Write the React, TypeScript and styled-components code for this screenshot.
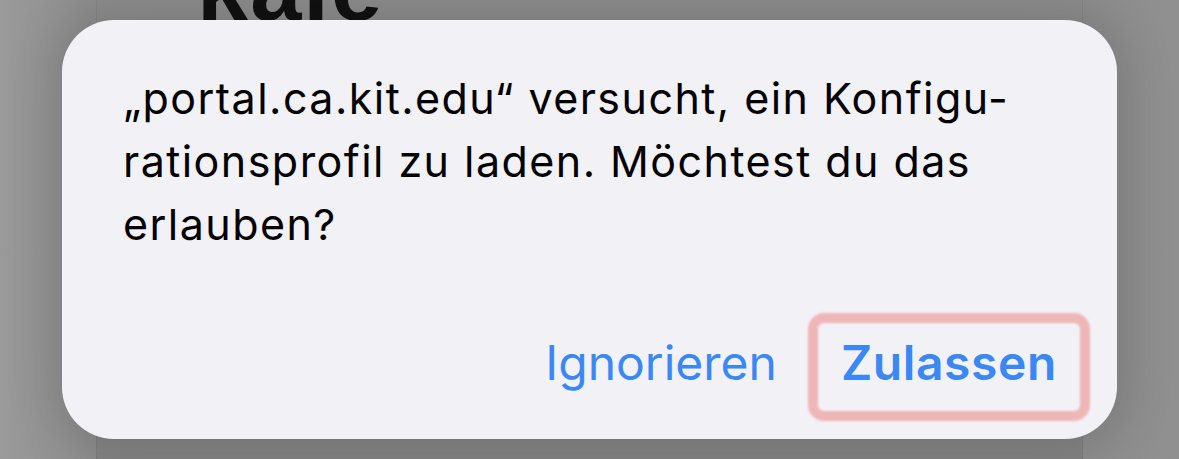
import React from 'react';
import styled, { createGlobalStyle } from 'styled-components';

const GlobalStyle = createGlobalStyle`
  html, body {
    margin: 0;
    padding: 0;
    width: 1179px;
    height: 459px;
    overflow: hidden;
    background: #8d8d8d;
    font-family: Inter, "Noto Sans", "Liberation Sans", sans-serif;
  }
`;

const Screen = styled.div`
  display: grid;
  width: 1179px;
  height: 459px;
  overflow: hidden;
  background: linear-gradient(90deg, #9a9a9a 0%, #8d8d8d 8%, #8d8d8d 92%, #909090 100%);
`;

const PageBehind = styled.div`
  grid-area: 1 / 1;
  margin: 0 96px;
  background: linear-gradient(180deg, rgba(0, 0, 0, 0) 0%, rgba(0, 0, 0, 0.02) 60%, rgba(0, 0, 0, 0.07) 100%);
  border-left: 1px solid rgba(0, 0, 0, 0.05);
  border-right: 1px solid rgba(0, 0, 0, 0.05);
  padding-left: 100px;
`;

const Heading = styled.h1`
  margin: -58px 0 0;
  font-family: "Liberation Sans", Arial, sans-serif;
  font-size: 92px;
  line-height: 92px;
  font-weight: 900;
  letter-spacing: 2px;
  color: #111;
`;

const Overlay = styled.div`
  grid-area: 1 / 1;
  display: grid;
  place-items: center;
`;

const Alert = styled.div`
  width: 1055px;
  height: 419px;
  box-sizing: border-box;
  padding: 47px 60px 46px 61px;
  display: flex;
  flex-direction: column;
  justify-content: space-between;
  background: #f2f1f6;
  border-radius: 52px;
  box-shadow: 0 0 50px 10px rgba(0, 0, 0, 0.14);
`;

const Message = styled.p`
  margin: 0;
  font-size: 43px;
  line-height: 63px;
  letter-spacing: 1.45px;
  color: #000;
  white-space: nowrap;
`;

const Actions = styled.div`
  display: flex;
  justify-content: flex-end;
  gap: 64px;
`;

const ActionButton = styled.button<{ $primary?: boolean; $highlight?: boolean }>`
  position: relative;
  padding: 0;
  border: 0;
  background: none;
  font-family: inherit;
  font-size: 48px;
  line-height: 60px;
  font-weight: ${(p) => (p.$primary ? 600 : 400)};
  letter-spacing: ${(p) => (p.$primary ? '0.6px' : '0')};
  color: #3a87f6;

  &::after {
    content: '';
    display: ${(p) => (p.$highlight ? 'block' : 'none')};
    position: absolute;
    top: -20px;
    bottom: -28px;
    left: -33px;
    right: -33px;
    border: 10px solid #efb6b7;
    border-radius: 16px;
    filter: blur(1px);
  }
`;

export default function App() {
  return (
    <>
      <GlobalStyle />
      <Screen>
        <PageBehind>
          <Heading>kale</Heading>
        </PageBehind>
        <Overlay>
          <Alert>
            <Message>
              „portal.ca.kit.edu“ versucht, ein Konfigu-
              <br />
              rationsprofil zu laden. Möchtest du das
              <br />
              erlauben?
            </Message>
            <Actions>
              <ActionButton>Ignorieren</ActionButton>
              <ActionButton $primary $highlight>
                Zulassen
              </ActionButton>
            </Actions>
          </Alert>
        </Overlay>
      </Screen>
    </>
  );
}
